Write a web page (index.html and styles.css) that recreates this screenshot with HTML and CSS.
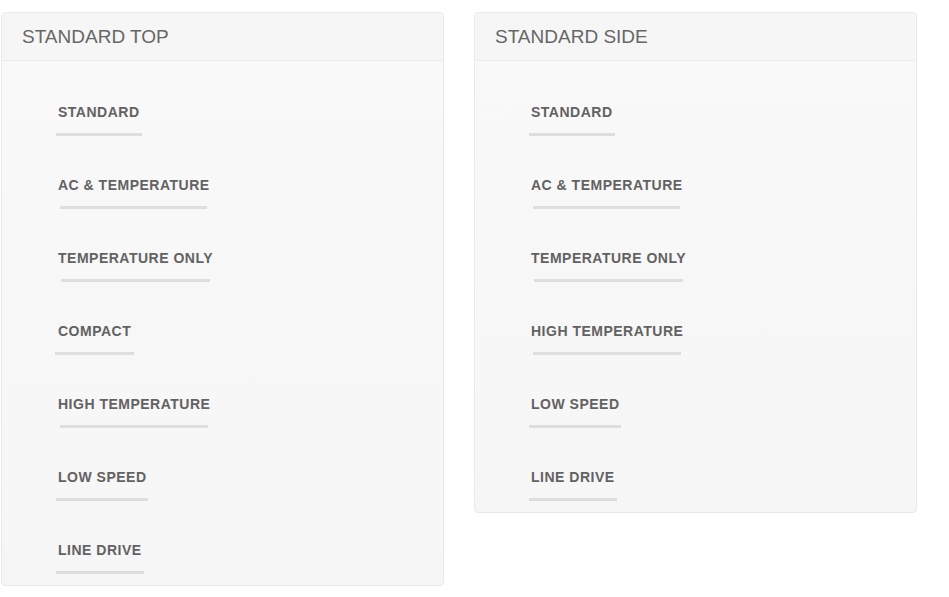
FILE: index.html
```html
<!DOCTYPE html>
<html>
<head>
<meta charset="utf-8">
<link rel="stylesheet" href="styles.css">
</head>
<body>
<div class="wrap">
  <section class="panel">
    <div class="panel-head">STANDARD TOP</div>
    <ul class="panel-body">
      <li class="item"><span class="label">STANDARD</span><span class="bar"></span></li>
      <li class="item"><span class="label">AC &amp; TEMPERATURE</span><span class="bar"></span></li>
      <li class="item"><span class="label">TEMPERATURE ONLY</span><span class="bar"></span></li>
      <li class="item"><span class="label">COMPACT</span><span class="bar"></span></li>
      <li class="item"><span class="label">HIGH TEMPERATURE</span><span class="bar"></span></li>
      <li class="item"><span class="label">LOW SPEED</span><span class="bar"></span></li>
      <li class="item"><span class="label">LINE DRIVE</span><span class="bar"></span></li>
    </ul>
  </section>
  <section class="panel">
    <div class="panel-head">STANDARD SIDE</div>
    <ul class="panel-body">
      <li class="item"><span class="label">STANDARD</span><span class="bar"></span></li>
      <li class="item"><span class="label">AC &amp; TEMPERATURE</span><span class="bar"></span></li>
      <li class="item"><span class="label">TEMPERATURE ONLY</span><span class="bar"></span></li>
      <li class="item"><span class="label">HIGH TEMPERATURE</span><span class="bar"></span></li>
      <li class="item"><span class="label">LOW SPEED</span><span class="bar"></span></li>
      <li class="item"><span class="label">LINE DRIVE</span><span class="bar"></span></li>
    </ul>
  </section>
</div>
</body>
</html>
```
FILE: styles.css
```css
html, body {
  margin: 0;
  padding: 0;
  background: #ffffff;
  font-family: "Liberation Sans", Arial, sans-serif;
}

.wrap {
  display: flex;
  align-items: flex-start;
  gap: 30px;
  padding: 12px 0 0 1px;
}

.panel {
  width: 443px;
  box-sizing: border-box;
  border: 1px solid #e9e9e9;
  border-radius: 4px;
  background: linear-gradient(#f9f9f9, #f6f6f6);
  overflow: hidden;
}

.panel-head {
  height: 48px;
  box-sizing: border-box;
  padding: 13px 0 0 20px;
  font-size: 19px;
  line-height: 22px;
  color: #666666;
  background: #f6f6f6;
  border-bottom: 1px solid #ececec;
}

.panel-body {
  list-style: none;
  margin: 0;
  padding: 41px 0 11px 56px;
  display: flex;
  flex-direction: column;
  gap: 39px;
}

.item {
  display: flex;
  flex-direction: column;
  align-self: flex-start;
}

.label {
  font-size: 14px;
  font-weight: bold;
  line-height: 20px;
  letter-spacing: 0.5px;
  color: #626262;
  white-space: nowrap;
}

.bar {
  display: block;
  margin-top: 11px;
  height: 3px;
  width: calc(87% + 15px);
  margin-left: calc(6.5% - 7.5px);
  background: #dedede;
}
```
